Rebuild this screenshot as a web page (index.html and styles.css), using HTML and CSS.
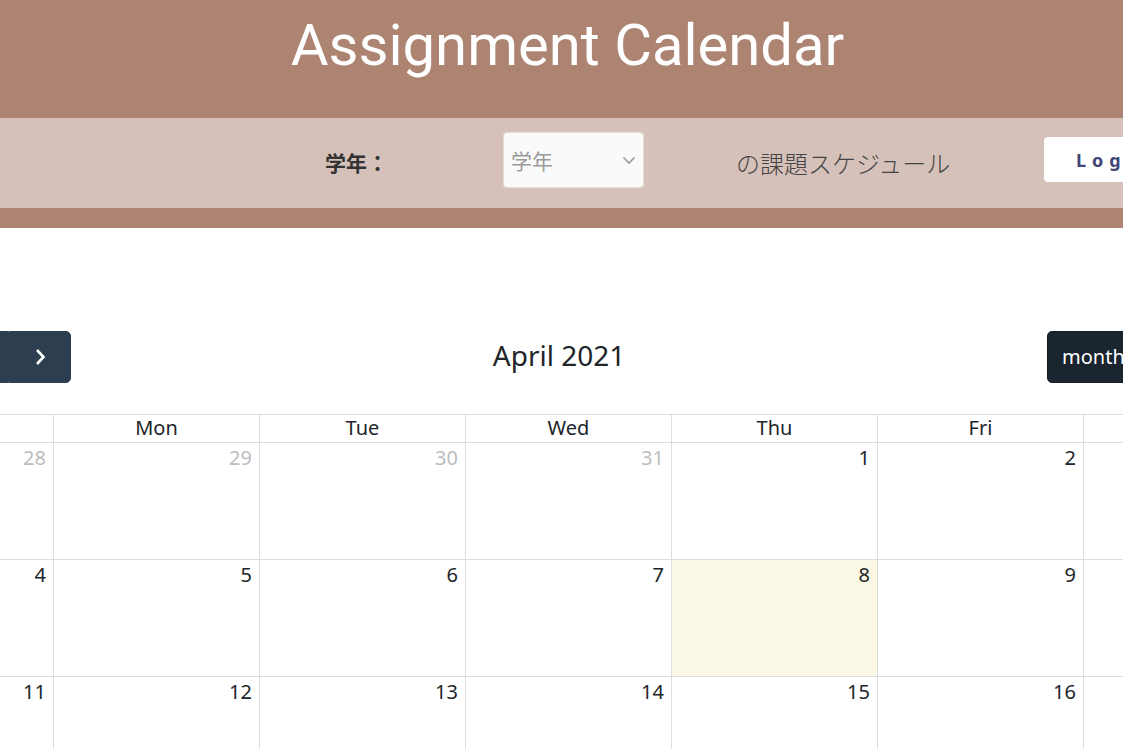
FILE: index.html
```html
<!DOCTYPE html>
<html lang="ja">
<head>
<meta charset="utf-8">
<title>Assignment Calendar</title>
<link rel="stylesheet" href="styles.css">
</head>
<body>
<header class="site-header">
  <h1 class="site-title">Assignment Calendar</h1>
  <div class="grade-bar">
    <span class="grade-label">学年：</span>
    <div class="grade-select">
      <span class="grade-placeholder">学年</span>
      <svg class="select-caret" width="14" height="9" viewBox="0 0 14 9"><polyline points="1.5,1.5 7,7 12.5,1.5" fill="none" stroke="#9a9a9a" stroke-width="1.6"/></svg>
    </div>
    <span class="grade-suffix">の課題スケジュール</span>
    <button class="logout-btn">Logout</button>
  </div>
</header>

<main class="calendar-wrap">
  <div class="calendar">
    <div class="cal-toolbar">
      <div class="cal-chunk cal-chunk-left">
        <button class="cal-btn cal-btn-today">today</button>
        <div class="cal-btn-group">
          <button class="cal-btn cal-btn-nav cal-btn-prev">
            <svg width="14" height="20" viewBox="0 0 14 20"><polyline points="10,3 3.5,10 10,17" fill="none" stroke="#fff" stroke-width="2.6"/></svg>
          </button>
          <button class="cal-btn cal-btn-nav cal-btn-next">
            <svg width="14" height="20" viewBox="0 0 14 20"><polyline points="4,3 10.5,10 4,17" fill="none" stroke="#fff" stroke-width="2.6"/></svg>
          </button>
        </div>
      </div>
      <h2 class="cal-title">April 2021</h2>
      <div class="cal-chunk cal-chunk-right">
        <div class="cal-btn-group">
          <button class="cal-btn cal-btn-view cal-btn-active cal-btn-month">month</button>
          <button class="cal-btn cal-btn-view cal-btn-week">week</button>
          <button class="cal-btn cal-btn-view cal-btn-day">day</button>
        </div>
      </div>
    </div>

    <div class="cal-grid">
      <div class="cal-head">Sun</div>
      <div class="cal-head">Mon</div>
      <div class="cal-head">Tue</div>
      <div class="cal-head">Wed</div>
      <div class="cal-head">Thu</div>
      <div class="cal-head">Fri</div>
      <div class="cal-head">Sat</div>

      <div class="cal-day other"><span class="num">28</span></div>
      <div class="cal-day other"><span class="num">29</span></div>
      <div class="cal-day other"><span class="num">30</span></div>
      <div class="cal-day other"><span class="num">31</span></div>
      <div class="cal-day"><span class="num">1</span></div>
      <div class="cal-day"><span class="num">2</span></div>
      <div class="cal-day"><span class="num">3</span></div>

      <div class="cal-day"><span class="num">4</span></div>
      <div class="cal-day"><span class="num">5</span></div>
      <div class="cal-day"><span class="num">6</span></div>
      <div class="cal-day"><span class="num">7</span></div>
      <div class="cal-day today"><span class="num">8</span></div>
      <div class="cal-day"><span class="num">9</span></div>
      <div class="cal-day"><span class="num">10</span></div>

      <div class="cal-day"><span class="num">11</span></div>
      <div class="cal-day"><span class="num">12</span></div>
      <div class="cal-day"><span class="num">13</span></div>
      <div class="cal-day"><span class="num">14</span></div>
      <div class="cal-day"><span class="num">15</span></div>
      <div class="cal-day"><span class="num">16</span></div>
      <div class="cal-day"><span class="num">17</span></div>

      <div class="cal-day"><span class="num">18</span></div>
      <div class="cal-day"><span class="num">19</span></div>
      <div class="cal-day"><span class="num">20</span></div>
      <div class="cal-day"><span class="num">21</span></div>
      <div class="cal-day"><span class="num">22</span></div>
      <div class="cal-day"><span class="num">23</span></div>
      <div class="cal-day"><span class="num">24</span></div>

      <div class="cal-day"><span class="num">25</span></div>
      <div class="cal-day"><span class="num">26</span></div>
      <div class="cal-day"><span class="num">27</span></div>
      <div class="cal-day"><span class="num">28</span></div>
      <div class="cal-day"><span class="num">29</span></div>
      <div class="cal-day"><span class="num">30</span></div>
      <div class="cal-day other"><span class="num">1</span></div>

      <div class="cal-day other"><span class="num">2</span></div>
      <div class="cal-day other"><span class="num">3</span></div>
      <div class="cal-day other"><span class="num">4</span></div>
      <div class="cal-day other"><span class="num">5</span></div>
      <div class="cal-day other"><span class="num">6</span></div>
      <div class="cal-day other"><span class="num">7</span></div>
      <div class="cal-day other"><span class="num">8</span></div>
    </div>
  </div>
</main>
</body>
</html>
```

FILE: styles.css
```css
html, body {
  margin: 0;
  padding: 0;
}
body {
  overflow-x: hidden;
  background: #fff;
  font-family: "Noto Sans", "Noto Sans CJK JP", sans-serif;
  color: #212529;
}

/* ---------- header ---------- */
.site-header {
  background: #ad8372;
  padding-bottom: 20px;
}
.site-title {
  margin: 0;
  height: 118px;
  box-sizing: border-box;
  padding: 11px 0 0 12px;
  text-align: center;
  font-family: Roboto, "Liberation Sans", sans-serif;
  font-weight: 400;
  font-size: 58px;
  line-height: 1.2;
  color: #fff;
}
.grade-bar {
  background: #d6c1ba;
  height: 90px;
  display: flex;
  align-items: center;
  padding-left: 325px;
  gap: 92px;
  white-space: nowrap;
  padding-bottom: 6px;
  box-sizing: border-box;
}
.grade-bar > * {
  flex: none;
}
.grade-label {
  width: 86px;
  font-family: "Noto Sans CJK JP", sans-serif;
  font-weight: 700;
  font-size: 21px;
  color: #333;
  padding-top: 4px;
}
.grade-select {
  width: 141px;
  height: 56px;
  box-sizing: border-box;
  background: #fafafa;
  border: 1px solid #e4dcd9;
  border-radius: 4px;
  display: flex;
  align-items: center;
  justify-content: space-between;
  padding: 0 7px 0 7px;
}
.grade-placeholder {
  font-family: "Noto Sans CJK JP", sans-serif;
  font-size: 21px;
  color: #9a9a9a;
}
.select-caret {
  display: block;
}
.grade-suffix {
  font-family: "Noto Sans CJK JP", sans-serif;
  font-size: 24px;
  font-weight: 300;
  color: #444;
  width: 216px;
  padding-top: 4px;
}
.logout-btn {
  height: 45px;
  background: #fff;
  border: none;
  border-radius: 4px;
  padding: 0 30px 0 32px;
  font-family: "Noto Sans", sans-serif;
  font-weight: 700;
  font-size: 18px;
  letter-spacing: 6px;
  color: #3f4677;
  margin-top: -1px;
}

/* ---------- calendar ---------- */
.calendar-wrap {
  padding-top: 103px;
}
.calendar {
  width: 1442px;
  margin-left: -153px;
}
.cal-toolbar {
  display: flex;
  justify-content: space-between;
  align-items: center;
  height: 52px;
  margin-bottom: 31px;
}
.cal-chunk {
  display: flex;
  align-items: center;
}
.cal-chunk-left {
  width: 224px;
  gap: 12px;
}
.cal-chunk-right {
  width: 242px;
}
.cal-title {
  margin: 0;
  font-size: 28px;
  font-weight: 400;
  color: #212529;
  line-height: 1.2;
  padding-bottom: 2px;
}
.cal-btn-group {
  display: flex;
}
.cal-btn {
  height: 52px;
  box-sizing: border-box;
  background: #2c3e50;
  border: 1px solid #2c3e50;
  color: #fff;
  font-family: "Noto Sans", sans-serif;
  font-size: 20px;
  line-height: 30px;
  padding: 0 14px;
  border-radius: 5px;
  display: flex;
  align-items: center;
  justify-content: center;
}
.cal-btn-today {
  width: 88px;
  opacity: 0.65;
}
.cal-btn-nav {
  width: 62px;
}
.cal-btn-prev {
  border-radius: 5px 0 0 5px;
}
.cal-btn-next {
  border-radius: 0 5px 5px 0;
}
.cal-btn-view {
  border-radius: 0;
}
.cal-btn-month {
  width: 96px;
  border-radius: 5px 0 0 5px;
  justify-content: flex-start;
}
.cal-btn-week {
  width: 80px;
}
.cal-btn-day {
  width: 66px;
  border-radius: 0 5px 5px 0;
}
.cal-btn-active {
  background: #1a252f;
  border-color: #151e27;
}

.cal-grid {
  display: grid;
  grid-template-columns: repeat(7, 206px);
  border-top: 1px solid #ddd;
  border-left: 1px solid #ddd;
}
.cal-head {
  border-right: 1px solid #ddd;
  border-bottom: 1px solid #ddd;
  text-align: center;
  font-size: 20px;
  line-height: 24px;
  padding: 1px 4px 2px;
  color: #212529;
}
.cal-day {
  border-right: 1px solid #ddd;
  border-bottom: 1px solid #ddd;
  text-align: right;
  font-size: 20px;
  line-height: 24px;
  padding: 3px 7px 0 4px;
  height: 113px;
}
.cal-day.other .num {
  opacity: 0.3;
}
.cal-day.today {
  background: #fbf8e5;
}
```
